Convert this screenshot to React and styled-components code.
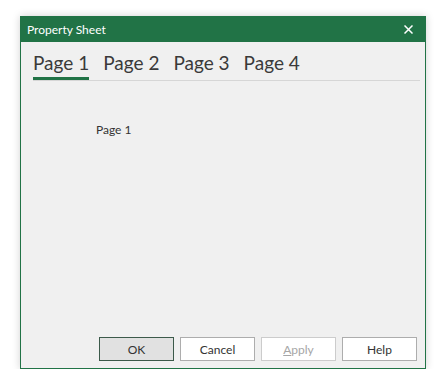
import React from "react";
import styled, { createGlobalStyle } from "styled-components";

const Global = createGlobalStyle`
  html, body { margin: 0; padding: 0; background: #ffffff; }
  body { font-family: Lato, "Noto Sans", sans-serif; }
`;

const Window = styled.div`
  margin: 16px 0 0 20px;
  width: 406px;
  height: 353px;
  box-sizing: border-box;
  border: 1px solid #217346;
  background: #f0f0f0;
  box-shadow: 0 0 8px rgba(0, 0, 0, 0.18);
  display: flex;
  flex-direction: column;
`;

const TitleBar = styled.div`
  height: 25px;
  background: #217346;
  color: #ffffff;
  display: flex;
  align-items: center;
  justify-content: space-between;
  padding: 0 12px 0 6px;
  font-size: 12px;
  flex: none;
`;

const CloseIcon = styled.svg`
  display: block;
  width: 9px;
  height: 9px;
`;

const Body = styled.div`
  flex: 1;
  display: flex;
  flex-direction: column;
  padding: 0 5px 0 12px;
`;

const TabStrip = styled.div`
  display: flex;
  gap: 14px;
  margin-top: 10px;
  border-bottom: 1px solid #d6d6d6;
`;

const Tab = styled.div`
  font-size: 19px;
  line-height: 22px;
  color: #3a3a3a;
  padding-bottom: 3px;
  border-bottom: 3px solid ${(p) => (p.$active ? "#217346" : "transparent")};
`;

const PageArea = styled.div`
  flex: 1;
  padding: 41px 0 0 63px;
  font-size: 12px;
  color: #333333;
`;

const Buttons = styled.div`
  display: flex;
  justify-content: flex-end;
  gap: 6px;
  padding: 0 3px 7px 0;
`;

const Button = styled.button`
  width: 75px;
  height: 24px;
  box-sizing: border-box;
  font-family: Lato, "Noto Sans", sans-serif;
  font-size: 12px;
  background: ${(p) => (p.$default ? "#e1e1e1" : "#ffffff")};
  border: 1px solid ${(p) => (p.$default ? "#3c5a4a" : p.disabled ? "#cccccc" : "#adadad")};
  color: ${(p) => (p.disabled ? "#a6a6a6" : "#333333")};
  padding: 0;
  text-align: center;
`;

const U = styled.span`
  text-decoration: underline;
`;

export default function App() {
  return (
    <>
      <Global />
      <Window>
        <TitleBar>
          <span>Property Sheet</span>
          <CloseIcon viewBox="0 0 9 9">
            <path d="M0.5 0.5 L8.5 8.5 M8.5 0.5 L0.5 8.5" stroke="#ffffff" strokeWidth="1.5" fill="none" />
          </CloseIcon>
        </TitleBar>
        <Body>
          <TabStrip>
            <Tab $active>Page 1</Tab>
            <Tab>Page 2</Tab>
            <Tab>Page 3</Tab>
            <Tab>Page 4</Tab>
          </TabStrip>
          <PageArea>Page 1</PageArea>
          <Buttons>
            <Button $default>OK</Button>
            <Button>Cancel</Button>
            <Button disabled>
              <U>A</U>pply
            </Button>
            <Button>Help</Button>
          </Buttons>
        </Body>
      </Window>
    </>
  );
}
